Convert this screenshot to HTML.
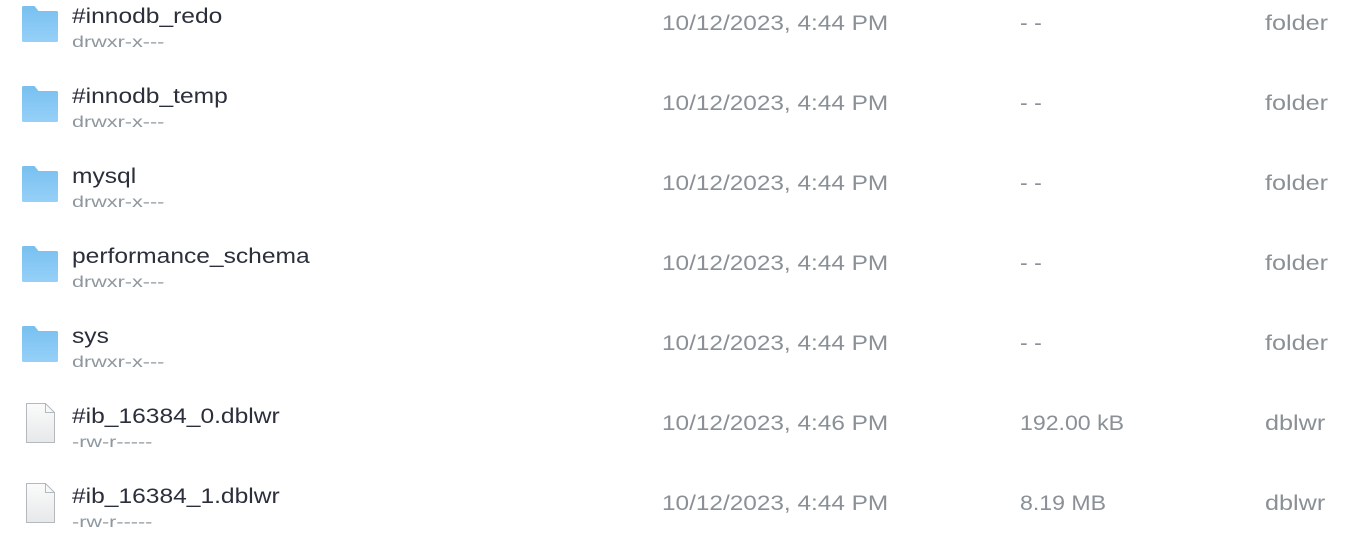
<!DOCTYPE html>
<html><head><style>
body{margin:0;background:#fff;width:1370px;height:546px;overflow:hidden;font-family:"Liberation Sans",sans-serif;}
.row{position:absolute;left:0;width:1370px;height:80px;}
.name{position:absolute;left:72px;top:5px;font-size:21px;color:#2b2e3b;transform:scaleX(1.17);transform-origin:left;white-space:nowrap;}
.perm{position:absolute;left:72px;top:34px;font-size:16px;color:#8e979e;transform:scaleX(1.35);transform-origin:left;white-space:nowrap;}
.c{position:absolute;top:12px;font-size:21px;color:#8a9096;transform-origin:left;white-space:nowrap;}
.d{left:662px;transform:scaleX(1.16)}.s{left:1020px;transform:scaleX(1.1)}.t{left:1265px;transform:scaleX(1.2)}
.ic{position:absolute;left:22px;top:6px;}
</style></head><body>
<svg width="0" height="0" style="position:absolute"><defs>
<linearGradient id="fg" x1="0" y1="0" x2="0" y2="1"><stop offset="0" stop-color="#78c0f0"/><stop offset="1" stop-color="#96d0f7"/></linearGradient>
<linearGradient id="pg" x1="0" y1="0" x2="0" y2="1"><stop offset="0" stop-color="#fbfbfb"/><stop offset="1" stop-color="#e6e8ea"/></linearGradient>
</defs></svg>
<div id="rows"></div>
<script>
const data=[["#innodb_redo","drwxr-x---","10/12/2023, 4:44 PM","- -","folder",1],
["#innodb_temp","drwxr-x---","10/12/2023, 4:44 PM","- -","folder",1],
["mysql","drwxr-x---","10/12/2023, 4:44 PM","- -","folder",1],
["performance_schema","drwxr-x---","10/12/2023, 4:44 PM","- -","folder",1],
["sys","drwxr-x---","10/12/2023, 4:44 PM","- -","folder",1],
["#ib_16384_0.dblwr","-rw-r-----","10/12/2023, 4:46 PM","192.00 kB","dblwr",0],
["#ib_16384_1.dblwr","-rw-r-----","10/12/2023, 4:44 PM","8.19 MB","dblwr",0]];
const folder='<svg class="ic" width="36" height="36" viewBox="0 0 36 36"><path d="M1.5 0h11l4 5H34.5a1.5 1.5 0 0 1 1.5 1.5v28a1.5 1.5 0 0 1-1.5 1.5h-33A1.5 1.5 0 0 1 0 34.5V1.5A1.5 1.5 0 0 1 1.5 0z" fill="url(#fg)"/></svg>';
const file='<svg class="ic" style="left:26px;top:3px" width="29" height="40" viewBox="0 0 29 40"><path d="M0.5 0.5h19l9 9v30h-28z" fill="url(#pg)" stroke="#b4b9be"/><path d="M19.5 0.5v9h9" fill="none" stroke="#b4b9be"/></svg>';
let h='';data.forEach((r,i)=>{h+=`<div class="row" style="top:${i*80}px">${r[5]?folder:file}<div class="name">${r[0]}</div><div class="perm">${r[1]}</div><div class="c d">${r[2]}</div><div class="c s">${r[3]}</div><div class="c t">${r[4]}</div></div>`;});
document.getElementById('rows').innerHTML=h;
</script>
</body></html>
